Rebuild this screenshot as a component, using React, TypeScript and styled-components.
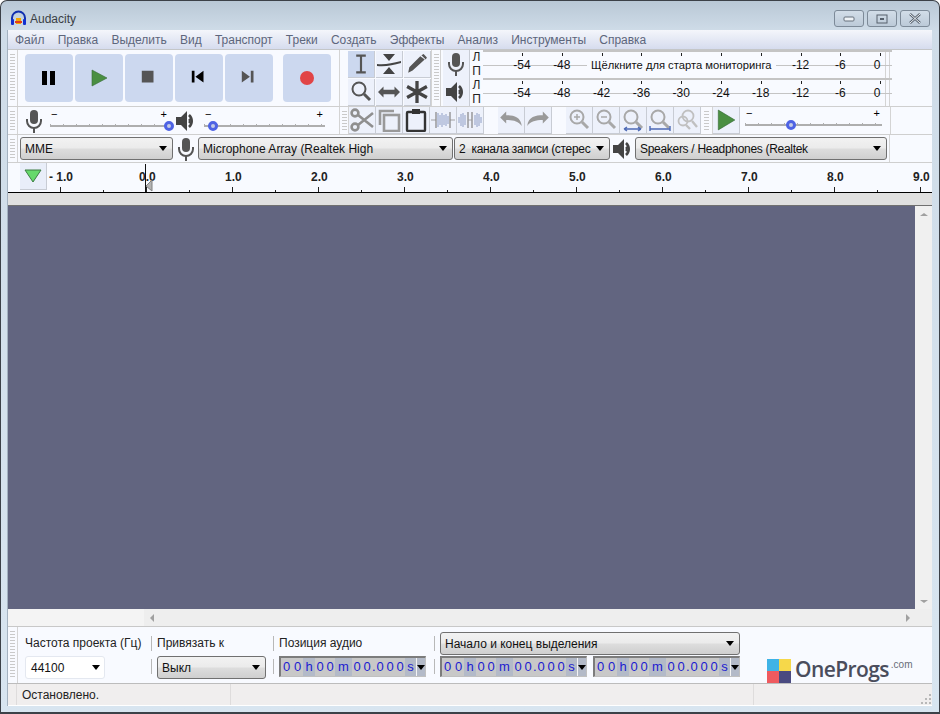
import React from "react";
import styled, { createGlobalStyle } from "styled-components";

const GlobalStyle = createGlobalStyle`
  html, body { margin: 0; padding: 0; background: #fff; }
  body { font-family: "Liberation Sans", Arial, sans-serif; font-size: 12px; color: #000; }
  * { box-sizing: border-box; }
`;

const Window = styled.div`
  width: 940px;
  height: 714px;
  display: flex;
  flex-direction: column;
  border: 1px solid #3c4148;
  border-bottom-width: 2px;
  border-radius: 7px 7px 0 0;
  background: linear-gradient(#b9c8d6 0, #cfdce8 30px, #d8e5f0 100%);
  padding: 0 7px 6px 7px;
  overflow: hidden;
`;

const TitleBar = styled.div`
  height: 29px;
  flex: none;
  display: flex;
  align-items: center;
  gap: 3px;
  padding: 6px 0 0 2px;
`;

const TitleText = styled.span`
  font-size: 12px;
  color: #3a3f45;
  flex: 1;
`;

const CaptionButtons = styled.div`
  display: flex;
  gap: 3px;
  align-self: flex-start;
  margin-top: 3px;
  margin-right: 2px;
`;

const CaptionButton = styled.div`
  width: 30px;
  height: 17px;
  border: 1px solid #7d8a98;
  border-radius: 3px;
  background: linear-gradient(#d2dde8, #bccad8);
  display: flex;
  align-items: center;
  justify-content: center;
`;

const Client = styled.div`
  flex: 1;
  display: flex;
  flex-direction: column;
  background: #f8faff;
  min-height: 0;
  box-shadow: -1px 0 0 #a4b2c0;
`;

const MenuBar = styled.div`
  height: 20px;
  flex: none;
  display: flex;
  align-items: center;
  gap: 13.2px;
  padding-left: 7px;
  background: linear-gradient(#f4f6fb, #d6dcee);
  border-bottom: 1px solid #c4c6c8;
  color: #5d667c;
`;

const ToolRow = styled.div<{ $h: number }>`
  height: ${(p) => p.$h}px;
  flex: none;
  display: flex;
  border-bottom: 1px solid #cfcfcf;
`;

const Grip = styled.div<{ $w?: number }>`
  width: ${(p) => p.$w ?? 10}px;
  flex: none;
  border-right: 1px solid #d4d4d4;
  display: flex;
  align-items: stretch;
  justify-content: center;
  padding: 4px 0;
  &::before {
    content: "";
    width: 5px;
    background: repeating-linear-gradient(#c9c9c9 0 1px, transparent 1px 3px);
  }
`;

const Group = styled.div<{ $w: number; $gap?: number; $pad?: string; $line?: boolean }>`
  width: ${(p) => p.$w}px;
  flex: none;
  display: flex;
  align-items: center;
  gap: ${(p) => p.$gap ?? 0}px;
  padding: ${(p) => p.$pad ?? "0"};
  border-right: ${(p) => (p.$line ? "1px solid #d4d4d4" : "0")};
`;

const TransportButton = styled.div<{ $ml?: number }>`
  width: 48px;
  height: 48px;
  flex: none;
  margin-left: ${(p) => p.$ml ?? 0}px;
  border-radius: 4px;
  background: #ccd8ef;
  display: flex;
  align-items: center;
  justify-content: center;
`;

const ToolGrid = styled.div`
  display: grid;
  grid-template-columns: repeat(3, 27px);
  grid-template-rows: 27px 27px;
  gap: 1px;
`;

const ToolButton = styled.div<{ $active?: boolean }>`
  width: 27px;
  height: 27px;
  flex: none;
  display: flex;
  align-items: center;
  justify-content: center;
  background: ${(p) => (p.$active ? "#ccd8ef" : "#edf1fb")};
  border-right: 1px solid #c8ccd4;
  border-bottom: 1px solid #c8ccd4;
`;

const MeterColumn = styled.div`
  display: flex;
  flex-direction: column;
  width: 442px;
  flex: none;
  margin-left: 2px;
`;

const MeterRow = styled.div`
  height: 28px;
  display: flex;
`;

const MeterEnd = styled.div`
  width: 5px;
  flex: none;
  border-left: 1px solid #d4d4d4;
  border-right: 1px solid #d4d4d4;
`;

const MeterIconButton = styled.div`
  width: 27px;
  flex: none;
  display: flex;
  align-items: center;
  justify-content: center;
  background: #edf1fb;
  border-right: 1px solid #c8ccd4;
`;

const Channels = styled.div`
  width: 13px;
  flex: none;
  display: flex;
  flex-direction: column;
  justify-content: space-around;
  align-items: center;
  font-size: 12px;
  line-height: 13px;
  color: #222;
`;

const MeterScale = styled.div`
  position: relative;
  flex: 1;
  display: flex;
  gap: 15.8px;
  align-items: center;
  padding-left: 27px;
  border-top: 2px solid #c4c4c4;
  &::before {
    content: "";
    position: absolute;
    left: 0;
    right: 0;
    top: 13px;
    height: 1px;
    background: #c4c4c4;
  }
`;

const MeterTick = styled.span<{ $last?: boolean }>`
  position: relative;
  width: 24px;
  height: 14px;
  flex: none;
  text-align: center;
  font-size: 12px;
  line-height: 14px;
  color: #111;
  padding-right: ${(p) => (p.$last ? 6 : 0)}px;
  &::before {
    content: "";
    position: absolute;
    left: 12px;
    top: -5px;
    width: 1px;
    height: 3px;
    background: #222;
  }
`;

const MeterHint = styled.span`
  position: absolute;
  left: 104px;
  top: 5px;
  padding: 0 4px;
  font-size: 11.2px;
  line-height: 16px;
  background: #f8faff;
  color: #111;
  white-space: nowrap;
`;

const SliderBox = styled.div<{ $w: number; $ml?: number }>`
  position: relative;
  width: ${(p) => p.$w}px;
  height: 26px;
  flex: none;
  margin-left: ${(p) => p.$ml ?? 0}px;
`;

const SliderTrack = styled.div`
  position: absolute;
  left: 0;
  right: 0;
  top: 16px;
  height: 3px;
  border-bottom: 2px solid #aeaeae;
  background: repeating-linear-gradient(90deg, #aeaeae 0 1px, transparent 1px 13px);
`;

const SliderSign = styled.span<{ $right?: boolean }>`
  position: absolute;
  top: 0;
  line-height: 13px;
  font-size: 11px;
  ${(p) => (p.$right ? "right: 2px;" : "left: 1px;")}
`;

const SliderThumb = styled.div`
  position: absolute;
  top: 13px;
  width: 10px;
  height: 10px;
  border-radius: 50%;
  border: 3px solid #4e63e4;
  background: #c4cbe6;
`;

const SpeakerSlot = styled.div`
  flex: none;
  display: flex;
  margin-left: 6px;
`;

const Combo = styled.div<{ $w: number; $flat?: boolean; $ml?: number; $tight?: boolean }>`
  width: ${(p) => p.$w}px;
  height: 23px;
  flex: none;
  display: flex;
  align-items: center;
  justify-content: space-between;
  margin-left: ${(p) => p.$ml ?? 0}px;
  padding: ${(p) => (p.$flat ? "0 4px 0 5px" : "0 5px 0 4px")};
  white-space: pre;
  overflow: hidden;
  color: #111;
  letter-spacing: ${(p) => (p.$tight ? "-0.3px" : "0")};
  border: ${(p) => (p.$flat ? "1px solid #e4e8f0" : "1px solid #707070")};
  border-radius: 3px;
  background: ${(p) =>
    p.$flat ? "#fff" : "linear-gradient(#f2f2f2 0, #ebebeb 48%, #dddddd 52%, #cfcfcf 100%)"};
`;

const Caret = styled.i`
  width: 0;
  height: 0;
  flex: none;
  border-left: 4px solid transparent;
  border-right: 4px solid transparent;
  border-top: 5px solid #000;
`;

const RulerRow = styled.div`
  height: 30px;
  flex: none;
  display: flex;
  position: relative;
  border-bottom: 1px solid #000;
  overflow: hidden;
`;

const RulerButton = styled.div`
  width: 27px;
  height: 27px;
  flex: none;
  margin-left: 12px;
  background: #e9eef9;
  border-right: 1px solid #c8ccd4;
  border-bottom: 1px solid #c8ccd4;
  display: flex;
  align-items: center;
  justify-content: center;
`;

const RulerCell = styled.div<{ $lead?: boolean }>`
  width: ${(p) => (p.$lead ? 99 : 86)}px;
  flex: none;
  height: 29px;
  position: relative;
  font-weight: bold;
  font-size: 12px;
  color: #222;
  &::before {
    content: "";
    position: absolute;
    left: ${(p) => (p.$lead ? 13 : 0)}px;
    bottom: 0;
    width: 1px;
    height: 5px;
    background: #222;
  }
  &::after {
    content: "";
    position: absolute;
    left: ${(p) => (p.$lead ? 56 : 43)}px;
    bottom: 0;
    width: 1px;
    height: 2px;
    background: #222;
  }
`;

const RulerLabel = styled.span<{ $lead?: boolean }>`
  position: absolute;
  left: ${(p) => (p.$lead ? 2 : -7)}px;
  top: 7px;
  white-space: nowrap;
`;

const PlayHead = styled.div`
  position: absolute;
  left: 137px;
  top: 1px;
  bottom: 0;
  width: 1px;
  background: #111;
`;

const SelectionMarker = styled.svg`
  position: absolute;
  left: 138px;
  top: 16px;
`;

const Band = styled.div`
  height: 13px;
  flex: none;
  background: #e0e0e0;
  border-bottom: 1px solid #707070;
`;

const TrackArea = styled.div`
  flex: 1;
  display: flex;
  min-height: 0;
`;

const TrackPanel = styled.div`
  flex: 1;
  background: #626580;
`;

const VScroll = styled.div`
  width: 17px;
  flex: none;
  background: #f0f0f0;
  display: flex;
  flex-direction: column;
  justify-content: space-between;
  align-items: center;
  padding: 7px 0 6px;
`;

const HScroll = styled.div`
  height: 18px;
  flex: none;
  display: flex;
  align-items: center;
  background: #eeeeee;
  border-bottom: 1px solid #c8c8c8;
`;

const HScrollGap = styled.div`
  width: 136px;
  height: 100%;
  flex: none;
  background: #f4f4f4;
`;

const HScrollTrack = styled.div`
  flex: 1;
  display: flex;
  align-items: center;
  justify-content: space-between;
  padding: 0 22px 0 6px;
`;

const SmallArrow = styled.i<{ $dir: "l" | "r" | "u" | "d" }>`
  width: 0;
  height: 0;
  ${(p) =>
    p.$dir === "l"
      ? "border-top:4px solid transparent;border-bottom:4px solid transparent;border-right:4px solid #a0a0a0;"
      : p.$dir === "r"
      ? "border-top:4px solid transparent;border-bottom:4px solid transparent;border-left:4px solid #a0a0a0;"
      : p.$dir === "u"
      ? "border-left:4px solid transparent;border-right:4px solid transparent;border-bottom:3px solid #a0a0a0;"
      : "border-left:4px solid transparent;border-right:4px solid transparent;border-top:3px solid #a0a0a0;"}
`;

const SelectionBar = styled.div`
  height: 57px;
  flex: none;
  display: flex;
  border-bottom: 1px solid #bcbcbc;
  position: relative;
`;

const SelGroup = styled.div<{ $w: number }>`
  width: ${(p) => p.$w}px;
  flex: none;
  display: flex;
  flex-direction: column;
  gap: 1px;
  padding: 5px 0 0 6px;
  position: relative;
  &::before {
    content: "";
    position: absolute;
    left: 0;
    top: 9px;
    height: 15px;
    width: 1px;
    background: #b8b8b8;
  }
  &::after {
    content: "";
    position: absolute;
    left: 0;
    top: 32px;
    height: 15px;
    width: 1px;
    background: #b8b8b8;
  }
`;

const FirstGroup = styled.div`
  width: 133px;
  flex: none;
  display: flex;
  flex-direction: column;
  gap: 1px;
  padding: 5px 0 0 7px;
`;

const SelLabel = styled.div`
  height: 23px;
  line-height: 22px;
  color: #222;
  white-space: nowrap;
`;

const TimeRow = styled.div`
  display: flex;
  gap: 6px;
`;

const TimeBox = styled.div`
  width: 147px;
  height: 21px;
  flex: none;
  display: flex;
  align-items: stretch;
  border: 2px solid #7c7c7c;
  border-right: 1px solid #c0c0c0;
  border-bottom: 1px solid #c0c0c0;
  background: #c4c4c4;
`;

const TimeCell = styled.span<{ $w: number; $unit?: boolean }>`
  width: ${(p) => p.$w}px;
  flex: none;
  text-align: center;
  line-height: 18px;
  font-size: 13px;
  color: #1c1cd0;
  background: ${(p) => (p.$unit ? "#b3bac8" : "#c8c8c8")};
`;

const TimeDrop = styled.span`
  flex: 1;
  display: flex;
  align-items: center;
  justify-content: center;
  background: #b3bac8;
  border-left: 1px solid #f4f4f4;
`;

const Logo = styled.div`
  position: absolute;
  left: 759px;
  bottom: 0;
  display: flex;
  align-items: flex-start;
  height: 24px;
`;

const LogoMark = styled.div`
  width: 24px;
  height: 24px;
  display: grid;
  grid-template-columns: 1fr 1fr;
  grid-template-rows: 1fr 1fr;
  flex: none;
`;

const LogoName = styled.span`
  margin-left: 4px;
  font-size: 21px;
  line-height: 21px;
  font-weight: 600;
  letter-spacing: -0.6px;
  color: #4a4d5c;
  font-family: "Open Sans", "Liberation Sans", sans-serif;
`;

const LogoCom = styled.span`
  font-size: 10px;
  line-height: 12px;
  color: #6a6d78;
  margin-left: 2px;
`;

const Tile = styled.div<{ $c: string }>`
  background: ${(p) => p.$c};
`;

const StatusBar = styled.div`
  height: 22px;
  flex: none;
  display: flex;
  background: #f0eeee;
  color: #222;
  align-items: stretch;
  border-bottom: 1px solid #fff;
`;

const StatusCell = styled.div<{ $w?: number }>`
  width: ${(p) => (p.$w ? `${p.$w}px` : "auto")};
  flex: ${(p) => (p.$w ? "none" : "1")};
  border-right: 1px solid #dedcdc;
  display: flex;
  align-items: center;
  padding-left: 5px;
  &:last-child {
    border-right: 0;
  }
`;

const ResizeGrip = styled.svg`
  margin-left: auto;
  align-self: flex-end;
  margin-right: 1px;
  margin-bottom: 1px;
`;

const menuItems = ["Файл", "Правка", "Выделить", "Вид", "Транспорт", "Треки", "Создать", "Эффекты", "Анализ", "Инструменты", "Справка"];
const rulerValues = ["0.0", "1.0", "2.0", "3.0", "4.0", "5.0", "6.0", "7.0", "8.0", "9.0"];
const scaleTop = ["-54", "-48", "", "", "", "", "", "-12", "-6", "0"];
const scaleBottom = ["-54", "-48", "-42", "-36", "-30", "-24", "-18", "-12", "-6", "0"];

const Mic = ({ c = "#555" }: { c?: string }) => (
  <svg width="20" height="24" viewBox="0 0 20 24" fill="none">
    <rect x="6" y="1" width="8" height="14" rx="4" fill={c} />
    <path d="M3 10v2a7 7 0 0 0 14 0v-2" stroke={c} strokeWidth="2" />
    <path d="M10 19v5" stroke={c} strokeWidth="2" />
  </svg>
);

const Speaker = () => (
  <svg width="22" height="22" viewBox="0 0 22 22" fill="none">
    <path d="M1 7h5l6-6v20l-6-6H1z" fill="#444" />
    <path d="M14 5a8 8 0 0 1 0 12" stroke="#444" strokeWidth="2.6" />
    <path d="M14 9a3 3 0 0 1 0 4" stroke="#444" strokeWidth="2" />
  </svg>
);

const Icon = ({ d, s = 20, fill, stroke, sw = 2 }: { d: string; s?: number; fill?: string; stroke?: string; sw?: number }) => (
  <svg width={s} height={s} viewBox="0 0 20 20" fill={fill ?? "none"} stroke={stroke} strokeWidth={sw}>
    <path d={d} />
  </svg>
);

const ZoomIcon = ({ c, mark, under }: { c: string; mark?: string; under?: string }) => (
  <svg width="24" height="24" viewBox="0 0 24 24" fill="none">
    <circle cx="10" cy="9" r="6.5" stroke={c} strokeWidth="2" />
    <path d="M15 14l6 6" stroke={c} strokeWidth="3" />
    {mark && <path d={mark} stroke={c} strokeWidth="1.5" />}
    {under && <path d={under} stroke="#4d6ab5" strokeWidth="1.4" fill="none" />}
  </svg>
);

const ZoomToggleIcon = () => (
  <svg width="24" height="24" viewBox="0 0 24 24" fill="none" stroke="#c0c0c0" strokeWidth="1.8">
    <circle cx="13" cy="8" r="5.5" />
    <circle cx="8" cy="13" r="4.5" />
    <path d="M17 13l5 6M11 17l4 4" strokeWidth="2.4" />
  </svg>
);

const Wave = ({ silence }: { silence?: boolean }) => (
  <svg width="24" height="20" viewBox="0 0 24 20" fill="none" stroke="#8796c0" strokeWidth="0.9">
    {silence ? (
      <>
        <path d="M1 7v6M3 4v12M5 3v14M7 5v10M17 5v10M19 3v14M21 4v12M23 7v6" />
        <path d="M10 2v16M14 2v16" stroke="#8a8a8a" strokeWidth="1.3" />
        <path d="M10 10h4" stroke="#999" />
      </>
    ) : (
      <>
        <path d="M0 10h5M19 10h5" stroke="#999" />
        <path d="M7 3v14M9 5v10M11 3v14M13 5v10M15 4v12M17 6v8" />
        <path d="M5 2v16M19 2v16" stroke="#8a8a8a" strokeWidth="1.3" />
      </>
    )}
  </svg>
);

const Meter = ({ labels, hint }: { labels: string[]; hint?: boolean }) => (
  <MeterScale>
    {labels.map((l, i) => (
      <MeterTick key={i} $last={i === labels.length - 1}>{l}</MeterTick>
    ))}
    {hint && <MeterHint>Щёлкните для старта мониторинга</MeterHint>}
  </MeterScale>
);

const Slider = ({ w, at, ml }: { w: number; at: number; ml?: number }) => (
  <SliderBox $w={w} $ml={ml}>
    <SliderSign>−</SliderSign>
    <SliderSign $right>+</SliderSign>
    <SliderTrack />
    <SliderThumb style={{ left: at }} />
  </SliderBox>
);

const TimeCode = () => (
  <TimeBox>
    <TimeCell $w={11}>0</TimeCell>
    <TimeCell $w={11}>0</TimeCell>
    <TimeCell $w={12} $unit>h</TimeCell>
    <TimeCell $w={10}>0</TimeCell>
    <TimeCell $w={10}>0</TimeCell>
    <TimeCell $w={17} $unit>m</TimeCell>
    <TimeCell $w={10}>0</TimeCell>
    <TimeCell $w={10}>0</TimeCell>
    <TimeCell $w={3}>.</TimeCell>
    <TimeCell $w={10}>0</TimeCell>
    <TimeCell $w={10}>0</TimeCell>
    <TimeCell $w={10}>0</TimeCell>
    <TimeCell $w={11} $unit>s</TimeCell>
    <TimeDrop><Caret /></TimeDrop>
  </TimeBox>
);

export default function App() {
  return (
    <>
      <GlobalStyle />
      <Window>
        <TitleBar>
          <svg width="17" height="17" viewBox="0 0 17 17" fill="none">
            <path d="M2 11V8a6.5 6.5 0 0 1 13 0v3" stroke="#1230b0" strokeWidth="2" />
            <rect x="1" y="9" width="3" height="6" rx="1" fill="#1230d0" />
            <rect x="13" y="9" width="3" height="6" rx="1" fill="#1230d0" />
            <path d="M5 11h7v2H5z" fill="#e23b20" />
            <path d="M6 8h5v3H6zM6 13h5v1H6z" fill="#f6a800" />
          </svg>
          <TitleText>Audacity</TitleText>
          <CaptionButtons>
            <CaptionButton>
              <svg width="12" height="6" viewBox="0 0 12 6"><rect x="1" y="1" width="10" height="4" rx="1" fill="#eef2f6" stroke="#66707c" /></svg>
            </CaptionButton>
            <CaptionButton>
              <svg width="12" height="10" viewBox="0 0 12 10"><rect x="1" y="1" width="10" height="8" fill="none" stroke="#56606c" /><rect x="4" y="4" width="4" height="2" fill="#56606c" /></svg>
            </CaptionButton>
            <CaptionButton>
              <svg width="14" height="11" viewBox="0 0 14 11"><path d="M2 1l10 9M12 1L2 10" stroke="#56606c" strokeWidth="2.4" /><path d="M2 1l10 9M12 1L2 10" stroke="#eef2f6" strokeWidth="1" /></svg>
            </CaptionButton>
          </CaptionButtons>
        </TitleBar>
        <Client>
          <MenuBar>
            {menuItems.map((m) => <span key={m}>{m}</span>)}
          </MenuBar>

          <ToolRow $h={57}>
            <Grip />
            <Group $w={322} $gap={2} $pad="0 0 0 7px" $line>
              <TransportButton><Icon s={20} fill="#000" d="M3 3h5v14H3zM11 3h5v14h-5z" /></TransportButton>
              <TransportButton><Icon s={20} fill="#4a8f42" stroke="#356b35" sw={0.6} d="M3 2l15 8L3 18z" /></TransportButton>
              <TransportButton><Icon s={18} fill="#555" d="M2 2h13v13H2z" /></TransportButton>
              <TransportButton><Icon s={18} fill="#000" d="M2 2h3v13H2zM15 2v13L6 8.5z" /></TransportButton>
              <TransportButton><Icon s={18} fill="#555" d="M2 2l9 6.5-9 6.5zM12 2h3v13h-3z" /></TransportButton>
              <TransportButton $ml={8}>
                <svg width="16" height="16"><circle cx="8" cy="8" r="7" fill="#e14547" /></svg>
              </TransportButton>
            </Group>
            <Group $w={92} $pad="0 0 0 8px" $line>
              <ToolGrid>
                <ToolButton $active><Icon s={24} stroke="#555" sw={1.8} d="M6 3h8M6 17h8M10 3v14" /></ToolButton>
                <ToolButton>
                  <svg width="26" height="24" viewBox="0 0 26 24" fill="#444"><path d="M7 2h12l-6 7zM7 22h12l-6-7z" /><path d="M1 12c8 1 15-1 24-3v2c-8 2-15 4-24 3z" /></svg>
                </ToolButton>
                <ToolButton><Icon s={22} fill="#555" d="M3 13L13 3l4 3L6 16l-4 2zM14 2l2-1 3 3-1 2z" /></ToolButton>
                <ToolButton><ZoomIcon c="#555" /></ToolButton>
                <ToolButton><Icon s={22} fill="#555" d="M0 10l5-5v3h10V5l5 5-5 5v-3H5v3z" /></ToolButton>
                <ToolButton><Icon s={22} stroke="#444" sw={3} d="M10 0v20M1 5l18 10M19 5L1 15" /></ToolButton>
              </ToolGrid>
            </Group>
            <Grip $w={9} />
            <MeterColumn>
              <MeterRow>
                <MeterIconButton><Mic /></MeterIconButton>
                <Channels><span>Л</span><span>П</span></Channels>
                <Meter labels={scaleTop} hint />
              </MeterRow>
              <MeterRow>
                <MeterIconButton><Speaker /></MeterIconButton>
                <Channels><span>Л</span><span>П</span></Channels>
                <Meter labels={scaleBottom} />
              </MeterRow>
            </MeterColumn>
            <MeterEnd />
          </ToolRow>

          <ToolRow $h={28}>
            <Grip />
            <Group $w={322} $pad="0 0 0 6px" $line>
              <Mic />
              <Slider w={119} at={114} ml={6} />
              <SpeakerSlot><Speaker /></SpeakerSlot>
              <Slider w={121} at={4} ml={7} />
            </Group>
            <Grip $w={9} />
            <ToolButton>
              <svg width="24" height="24" viewBox="0 0 24 24" fill="none" stroke="#8f8f8f" strokeWidth="2.6">
                <circle cx="5" cy="5" r="3.4" />
                <circle cx="5" cy="19" r="3.4" />
                <path d="M8 7l15 12M8 17L23 5" />
              </svg>
            </ToolButton>
            <ToolButton>
              <svg width="24" height="24" viewBox="0 0 24 24" fill="none" stroke="#999" strokeWidth="2.6">
                <path d="M3 17V3h14" />
                <rect x="7" y="7" width="15" height="16" />
              </svg>
            </ToolButton>
            <ToolButton>
              <svg width="22" height="24" viewBox="0 0 22 24" fill="none"><rect x="2" y="4" width="18" height="19" rx="1" stroke="#333" strokeWidth="2.4" /><rect x="7" y="1" width="8" height="5" fill="#333" /></svg>
            </ToolButton>
            <ToolButton><Wave /></ToolButton>
            <ToolButton><Wave silence /></ToolButton>
            <Group $w={14} />
            <ToolButton><Icon s={24} fill="#999" d="M1 8l5-5v3c6 0 12 1 13 9-3-4-7-5-13-5v3z" /></ToolButton>
            <ToolButton><Icon s={24} fill="#999" d="M19 8l-5-5v3C8 6 2 7 1 15c3-4 7-5 13-5v3z" /></ToolButton>
            <Group $w={14} />
            <ToolButton><ZoomIcon c="#a8a8a8" mark="M7 9h6M10 6v6" /></ToolButton>
            <ToolButton><ZoomIcon c="#a8a8a8" mark="M7 9h6" /></ToolButton>
            <ToolButton><ZoomIcon c="#a8a8a8" under="M3 21h17M3 21l3-2M3 21l3 2M20 21l-3-2M20 21l-3 2" /></ToolButton>
            <ToolButton><ZoomIcon c="#a8a8a8" under="M2 18v5M22 18v5M2 21h20" /></ToolButton>
            <ToolButton><ZoomToggleIcon /></ToolButton>
            <Grip $w={12} />
            <ToolButton><Icon s={22} fill="#4a8f42" stroke="#356b35" sw={0.6} d="M3 1l15 9L3 19z" /></ToolButton>
            <Slider w={137} at={41} ml={5} />
            <Group $w={9} $line />
          </ToolRow>

          <ToolRow $h={28}>
            <Grip />
            <Group $w={870} $pad="0 0 0 2px">
              <Combo $w={153}>MME<Caret /></Combo>
              <Group $w={25} $pad="0 0 0 3px"><Mic /></Group>
              <Combo $w={255}>Microphone Array (Realtek High<Caret /></Combo>
              <Combo $w={156} $ml={1} $tight>2  канала записи (стерес<Caret /></Combo>
              <Group $w={25} $pad="0 0 0 2px"><Speaker /></Group>
              <Combo $w={252} $tight>Speakers / Headphones (Realtek<Caret /></Combo>
            </Group>
            <Group $w={2} $line />
          </ToolRow>

          <RulerRow>
            <RulerButton>
              <svg width="18" height="14" viewBox="0 0 18 14"><path d="M1 1h16l-8 12z" fill="#66d96b" stroke="#3c7d42" /></svg>
            </RulerButton>
            <RulerCell $lead>
              <RulerLabel $lead>- 1.0</RulerLabel>
            </RulerCell>
            {rulerValues.map((v) => (
              <RulerCell key={v}><RulerLabel>{v}</RulerLabel></RulerCell>
            ))}
            <PlayHead />
            <SelectionMarker width="7" height="13" viewBox="0 0 7 13">
              <path d="M0 7l6-6v11z" fill="#b4b4b4" stroke="#808080" />
            </SelectionMarker>
          </RulerRow>
          <Band />

          <TrackArea>
            <TrackPanel />
            <VScroll><SmallArrow $dir="u" /><SmallArrow $dir="d" /></VScroll>
          </TrackArea>

          <HScroll>
            <HScrollGap />
            <HScrollTrack><SmallArrow $dir="l" /><SmallArrow $dir="r" /></HScrollTrack>
          </HScroll>

          <SelectionBar>
            <Grip />
            <FirstGroup>
              <SelLabel>Частота проекта (Гц)</SelLabel>
              <Combo $w={80} $flat>44100<Caret /></Combo>
            </FirstGroup>
            <SelGroup $w={122}>
              <SelLabel>Привязать к</SelLabel>
              <Combo $w={109}>Выкл<Caret /></Combo>
            </SelGroup>
            <SelGroup $w={161}>
              <SelLabel>Позиция аудио</SelLabel>
              <TimeCode />
            </SelGroup>
            <SelGroup $w={306}>
              <Combo $w={300}>Начало и конец выделения<Caret /></Combo>
              <TimeRow>
                <TimeCode />
                <TimeCode />
              </TimeRow>
            </SelGroup>
            <Logo>
              <LogoMark>
                <Tile $c="#3fb3e6" /><Tile $c="#f6d84a" />
                <Tile $c="#ef5a5f" /><Tile $c="#4a4a80" />
              </LogoMark>
              <LogoName>OneProgs</LogoName>
              <LogoCom>.com</LogoCom>
            </Logo>
          </SelectionBar>

          <StatusBar>
            <StatusCell $w={9} />
            <StatusCell $w={214}>Остановлено.</StatusCell>
            <StatusCell $w={523} />
            <StatusCell>
              <ResizeGrip width="10" height="10" viewBox="0 0 10 10" fill="#b8b8b8">
                <path d="M8 0h2v2H8zM4 4h2v2H4zM8 4h2v2H8zM0 8h2v2H0zM4 8h2v2H4zM8 8h2v2H8z" />
              </ResizeGrip>
            </StatusCell>
          </StatusBar>
        </Client>
      </Window>
    </>
  );
}
